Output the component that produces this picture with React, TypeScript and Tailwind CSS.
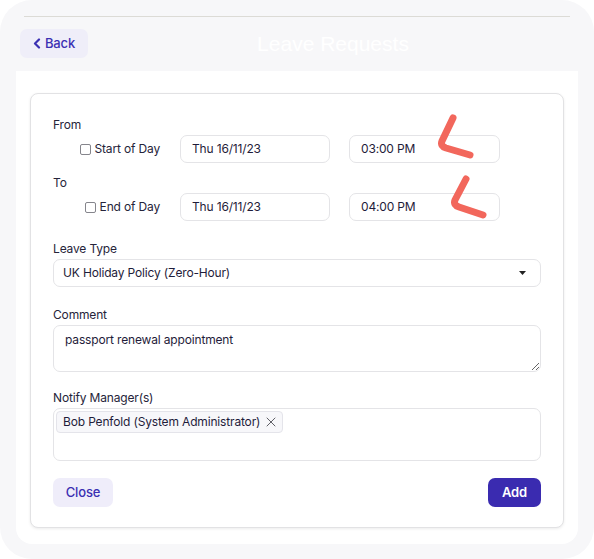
import { X } from "lucide-react";

const Label = ({ children }: { children: React.ReactNode }) => (
  <div className="text-[12px] leading-4 text-[#26243a]">{children}</div>
);

const Field = ({ value, className }: { value: string; className: string }) => (
  <div
    className={`flex h-[28px] items-center rounded-[7px] border border-[#e4e4e7] bg-white px-[11px] text-[12px] text-[#1f1c3a] ${className}`}
  >
    {value}
  </div>
);

const DayRow = ({ label, date, time }: { label: string; date: string; time: string }) => (
  <div className="mt-[2px] flex items-center">
    <div className="flex w-[107px] items-center justify-end gap-[4px] text-[12px] text-[#26243a]">
      <span className="h-[11px] w-[11px] rounded-[2px] border border-[#85858c] bg-white" />
      <span>{label}</span>
    </div>
    <Field value={date} className="ml-[20px] w-[150px]" />
    <Field value={time} className="ml-[19px] w-[151px]" />
  </div>
);

const App = () => {
  return (
    <div
      className="relative h-[559px] w-[594px] bg-white tracking-[-0.01em]"
      style={{ fontFamily: "Inter, 'Liberation Sans', sans-serif" }}
    >
      <div className="flex h-full flex-col rounded-[32px] bg-[#f7f7f9]">
        {/* top edge of previous screen */}
        <div className="mx-[24px] mt-[16px] h-[1px] bg-[#dcdbd6]" />

        {/* Header */}
        <div className="mt-[12px] flex h-[29px] items-center pl-[20px] pr-[16px]">
          <button className="flex h-[29px] w-[68px] items-center justify-center gap-[4px] rounded-[7px] bg-[#efeef9] text-[13px] font-medium text-[#3b30b3]">
            <svg width="8" height="11" viewBox="0 0 8 11" fill="none">
              <path d="M6 1.5L2 5.5L6 9.5" stroke="#3b30b3" strokeWidth="2.2" strokeLinecap="round" strokeLinejoin="round" />
            </svg>
            Back
          </button>
          <div
            className="flex-1 text-center text-[21px] tracking-normal text-white"
            style={{ fontFamily: "'Liberation Sans', Arial, sans-serif" }}
          >
            Leave Requests
          </div>
        </div>

        {/* White panel */}
        <div className="mx-[16px] mt-[13px] rounded-b-[16px] bg-white px-[14px] pb-[16px] pt-[22px]">
          <div className="flex flex-col rounded-[8px] border border-[#e2e2e4] bg-white px-[22px] pb-[20px] pt-[23px] shadow-[0_1px_3px_rgba(0,0,0,0.08)]">
            <Label>From</Label>
            <DayRow label="Start of Day" date="Thu 16/11/23" time="03:00 PM" />
            <div className="mt-[12px]">
              <Label>To</Label>
            </div>
            <DayRow label="End of Day" date="Thu 16/11/23" time="04:00 PM" />

            <div className="mt-[20px]">
              <Label>Leave Type</Label>
            </div>
            <div className="mt-[2px] flex h-[28px] items-center justify-between rounded-[7px] border border-[#e4e4e7] pl-[9px] pr-[14px] text-[12px] text-[#1f1c3a]">
              <span>UK Holiday Policy (Zero-Hour)</span>
              <svg width="7" height="4" viewBox="0 0 7 4">
                <path d="M0 0H7L3.5 4Z" fill="#222" />
              </svg>
            </div>

            <div className="mt-[20px]">
              <Label>Comment</Label>
            </div>
            <textarea
              readOnly
              defaultValue="passport renewal appointment"
              className="mt-[2px] h-[47px] rounded-[7px] border border-[#e4e4e7] px-[11px] py-[6px] text-[12px] leading-4 text-[#1f1c3a] outline-none"
            />

            <div className="mt-[18px]">
              <Label>Notify Manager(s)</Label>
            </div>
            <div className="mt-[2px] flex h-[53px] items-start rounded-[7px] border border-[#e4e4e7] p-[2px]">
              <span className="flex h-[22px] items-center gap-[3px] rounded-[4px] border border-[#e4e4ea] bg-[#f7f7fa] pl-[6px] pr-[3px] text-[12px] text-[#1f1c3a]">
                Bob Penfold (System Administrator)
                <X size={16} strokeWidth={1.5} className="text-[#5f5f66]" />
              </span>
            </div>

            <div className="mt-[17px] flex items-center justify-between">
              <button className="h-[29px] w-[60px] rounded-[7px] bg-[#efedfa] text-[13px] font-medium text-[#3a2fb2]">
                Close
              </button>
              <button className="h-[29px] w-[53px] rounded-[7px] bg-[#3a2bb0] text-[13px] font-semibold text-white">
                Add
              </button>
            </div>
          </div>
        </div>
      </div>

      {/* hand-drawn annotation marks */}
      <svg className="pointer-events-none absolute left-0 top-0" width="594" height="559" viewBox="0 0 594 559" fill="none">
        <path d="M453 118 L442 141 Q440 146 446 148 L470 155" stroke="#f2675c" strokeWidth="7" strokeLinecap="round" strokeLinejoin="round" />
        <path d="M466 179 L455 200 Q453 205 459 207 L483 215" stroke="#f2675c" strokeWidth="7" strokeLinecap="round" strokeLinejoin="round" />
      </svg>
    </div>
  );
};

export default App;
